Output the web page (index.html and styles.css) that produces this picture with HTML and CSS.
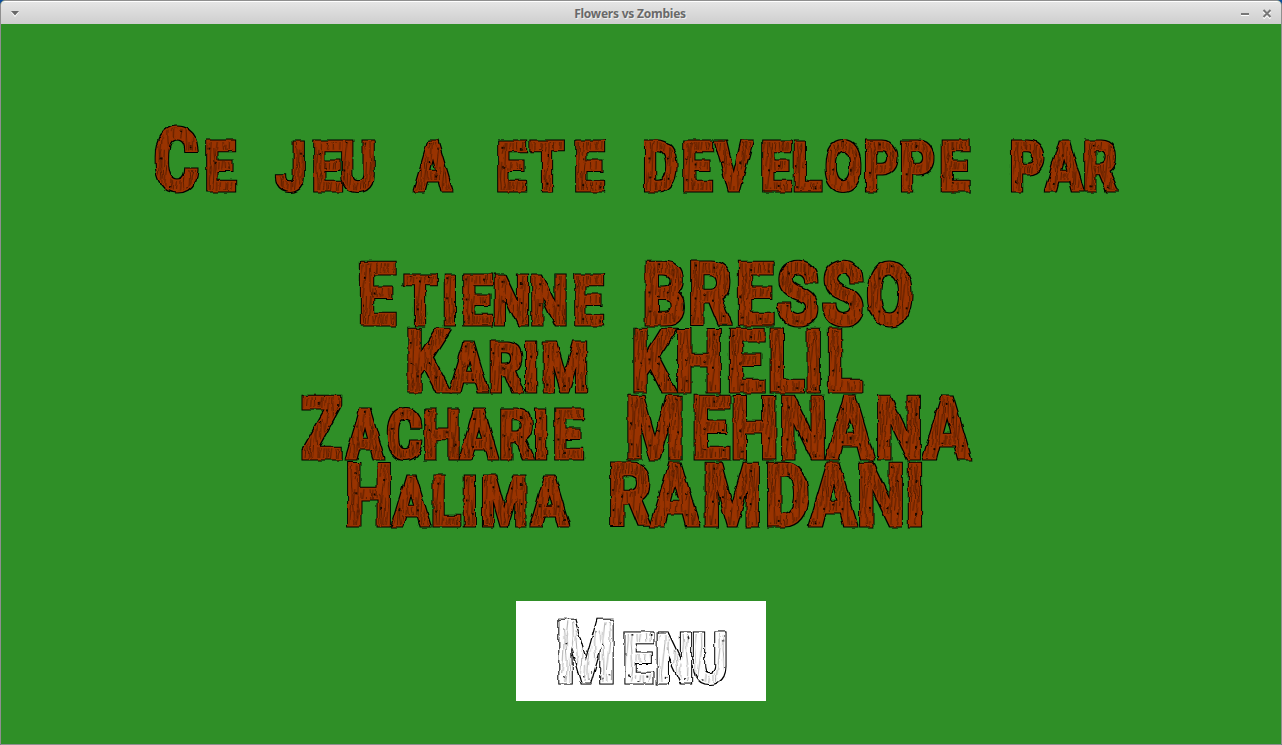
FILE: index.html
```html
<!DOCTYPE html>
<html lang="fr">
<head>
<meta charset="utf-8">
<title>Flowers vs Zombies</title>
<link rel="stylesheet" href="styles.css">
</head>
<body>
<svg class="defs" width="0" height="0" aria-hidden="true">
  <defs>
    <pattern id="wood" width="23" height="61" patternUnits="userSpaceOnUse" patternTransform="rotate(3)">
      <rect width="23" height="61" fill="#993300"/>
      <path class="grain" d="M2 0q3 15 0 30t0 31M6 4q-2 14 1 28t-1 24M10 0v22q4 8 0 16v23M14 8q3 20 0 44M18 0q-3 16 0 32t0 29M21 12v30M11 26q-3 5 0 8"/>
      <path class="nail" d="M7 9h2M16 22h2M5 50h2M17 55h2"/>
    </pattern>
    <pattern id="pale" width="23" height="61" patternUnits="userSpaceOnUse" patternTransform="rotate(3)">
      <rect width="23" height="61" fill="#fff"/>
      <path class="grain pale" d="M2 0q3 15 0 30t0 31M8 4q-2 14 1 28t-1 24M14 8q3 20 0 44M19 0q-3 16 0 32t0 29"/>
      <path class="nail" d="M7 9h2M16 22h2M5 50h2M17 55h2"/>
    </pattern>
    <filter id="rough" x="-5%" y="-20%" width="110%" height="140%" color-interpolation-filters="sRGB">
      <feTurbulence type="fractalNoise" baseFrequency="0.09" numOctaves="2" seed="4" result="noise"/>
      <feMorphology in="SourceAlpha" operator="dilate" radius="1" result="edge"/>
      <feMerge result="planks"><feMergeNode in="edge"/><feMergeNode in="SourceGraphic"/></feMerge>
      <feDisplacementMap in="planks" in2="noise" scale="4" xChannelSelector="R" yChannelSelector="G"/>
    </filter>
  </defs>
</svg>
<div class="window">
  <header class="titlebar">
    <svg class="arrow" width="10" height="8" viewBox="0 0 10 8"><path d="M1 2h8L5 7z" fill="#fff"/><path d="M1 1h8L5 5.5z" fill="#686868"/></svg>
    <h1 class="title">Flowers vs Zombies</h1>
    <div class="controls">
      <svg width="10" height="10" viewBox="0 0 10 10"><path d="M1 6.5h8" stroke="#fff"/><path d="M1 5h8" stroke="#777" stroke-width="2"/></svg>
      <svg width="10" height="10" viewBox="0 0 10 10"><path d="M1.5 2.5l7 7m0-7l-7 7" stroke="#fff" stroke-width="2"/><path d="M1.5 1l7 7m0-7l-7 7" stroke="#777" stroke-width="2"/></svg>
    </div>
  </header>
  <main class="stage">
    <svg class="line intro" viewBox="0 0 1600 67" preserveAspectRatio="none">
      <text y="64"><tspan class="cap" x="219">C</tspan><tspan x="274 310">e </tspan><tspan x="362.5 407.5 446 480">jeu </tspan><tspan x="540 590">a </tspan><tspan x="637.5 682.5 735 780">ete </tspan><tspan x="824 870 916 969 1007.5 1052.5 1100 1145 1192 1230">developpe </tspan><tspan x="1282.5 1329 1374">par</tspan></text>
    </svg>
    <div class="names">
      <svg class="line" viewBox="0 0 1600 67" preserveAspectRatio="none">
        <text y="64"><tspan class="cap" x="470">E</tspan><tspan x="524 561 595 638 685 734 780">tienne </tspan><tspan class="cap" x="829 886 942.5 996 1052.5 1111">BRESSO</tspan></text>
      </svg>
      <svg class="line" viewBox="0 0 1600 67" preserveAspectRatio="none">
        <text y="64"><tspan class="cap" x="532.5">K</tspan><tspan x="585 631 662.5 705 760">arim </tspan><tspan class="cap" x="815 872.5 931 981 1016 1054">KHELIL</tspan></text>
      </svg>
      <svg class="line" viewBox="0 0 1600 67" preserveAspectRatio="none">
        <text y="64"><tspan class="cap" x="401">Z</tspan><tspan x="455 504 551 597.5 644 675 709 750">acharie </tspan><tspan class="cap" x="817.5 887 942 1002.5 1061 1122.5 1182.5">MEHNANA</tspan></text>
      </svg>
      <svg class="line" viewBox="0 0 1600 67" preserveAspectRatio="none">
        <text y="64"><tspan class="cap" x="460">H</tspan><tspan x="512.5 556 586 629 686 735">alima </tspan><tspan class="cap" x="786 842.5 914 982.5 1040 1100 1142.5">RAMDANI</tspan></text>
      </svg>
    </div>
    <button class="menu" type="button">
      <svg class="line" viewBox="0 0 312.5 67" preserveAspectRatio="none">
        <text y="64"><tspan class="cap" x="87.5">M</tspan><tspan x="153 198 242">enu</tspan></text>
      </svg>
    </button>
  </main>
</div>
</body>
</html>
```
FILE: styles.css
```css
* { box-sizing: border-box; }
body { margin: 0; background: #0b4c9c; overflow: hidden; }
.defs { position: absolute; }
.window {
  width: 1282px;
  height: 745px;
  border: 1px solid #8f8f8f;
  border-radius: 5px 5px 0 0;
  background: #2f8f27;
  overflow: hidden;
  display: flex;
  flex-direction: column;
}
.titlebar {
  height: 23px;
  flex: none;
  display: grid;
  grid-template-columns: 38px 1fr 60px;
  align-items: center;
  padding: 1px 9px 0;
  border-top: 1px solid #fff;
  background: linear-gradient(#e5e5e5, #cecece);
}
.arrow { display: block; }
.title {
  margin: 0;
  text-align: center;
  font: bold 12px/20px "Noto Sans", "Open Sans", sans-serif;
  letter-spacing: -0.23px;
  color: #696969;
  text-shadow: 1px 1px 0 #eee;
}
.controls { display: flex; justify-content: flex-end; gap: 12px; }
.controls svg { display: block; }
.stage {
  flex: 1;
  display: flex;
  flex-direction: column;
  align-items: center;
  padding-top: 102px;
}
.line {
  display: block;
  width: 1280px;
  height: 67px;
  overflow: visible;
  filter: url(#rough);
}
.line text {
  font: bold 67px Roboto, "Liberation Sans", sans-serif;
  text-transform: uppercase;
  text-anchor: middle;
  fill: url(#wood);
  stroke: #993300;
  stroke-width: 3px;
  paint-order: stroke;
}
.line .cap { font-size: 85px; }
.grain { fill: none; stroke: #421500; stroke-width: 0.9; }
.pale { stroke: #999; }
.nail { stroke: #000; stroke-width: 2; }
.names { margin-top: 67px; }
.menu {
  width: 250px;
  height: 100px;
  margin-top: 73px;
  padding: 17px 0 16px;
  border: 0;
  background: #fff;
}
.menu .line { width: 250px; }
.menu .line text { fill: url(#pale); stroke: #fff; }
```
